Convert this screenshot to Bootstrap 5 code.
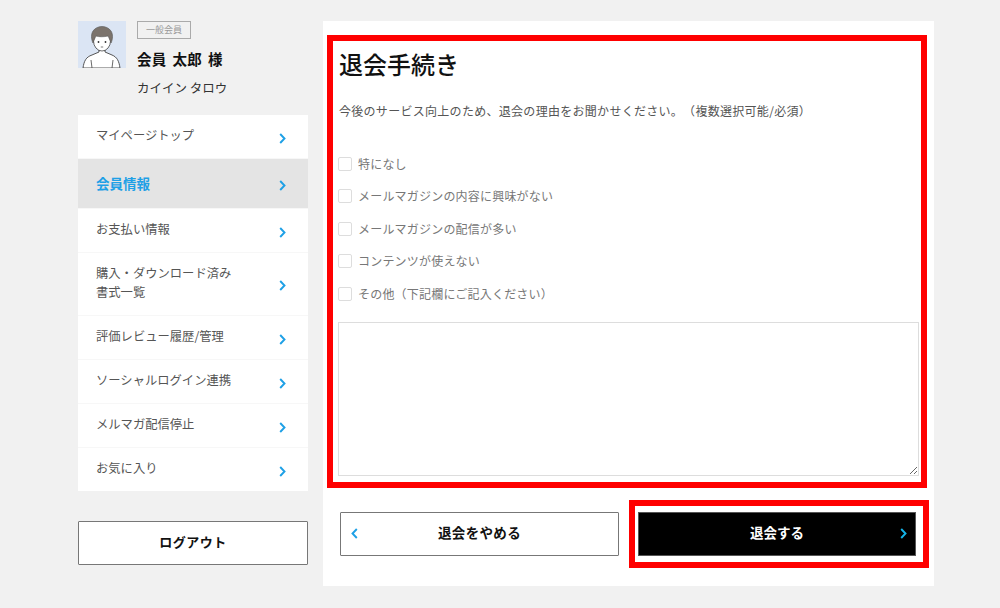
<!DOCTYPE html>
<html lang="ja">
<head>
<meta charset="utf-8">
<title>退会手続き</title>
<link href="https://cdn.jsdelivr.net/npm/bootstrap@5.3.0/dist/css/bootstrap.min.css" rel="stylesheet">
<style>
html,body{height:608px;overflow:hidden}
body{background:#f1f1f1;font-family:"Noto Sans CJK JP","Liberation Sans",sans-serif;color:#333;text-spacing-trim:space-all}
.shell{padding:21px 66px 0 78px;gap:15px}
.side{width:230px;flex:none}
.avatar{width:48px;height:47px;flex:none;background:#dbe5f4;display:block}
.who{margin-left:11px}
.rank{display:block;width:54px;height:18px;border:1px solid #aaa;font-size:9px;line-height:16px;text-align:center;color:#999;letter-spacing:0}
.uname{font-size:14.5px;font-weight:700;color:#111;line-height:20px;margin-top:10px;word-spacing:2.8px;letter-spacing:.15px}
.ukana{font-size:12.5px;line-height:18px;margin-top:10px;color:#333}
.menu{margin-top:18px;gap:1px;background:#f7f7f7}
.mitem{background:#fff;color:#555;font-size:12.3px;line-height:19px;height:43px;padding:0 22px 0 18px;text-decoration:none}
.mitem .mtxt{margin-top:-3px}
.mitem svg{margin-top:3px}
.mitem.tall{height:62px}
.mitem.now{background:#e4e4e4;color:#1ea0e6;font-weight:700;font-size:13.5px;height:49px}
.mitem.now .mtxt{margin-top:0}
.logout{display:block;margin-top:30px;height:44px;border:1px solid #777;border-radius:1px;background:#fff;color:#111;font-size:13px;font-weight:700;text-align:center;padding:0 0 2px;letter-spacing:.5px}
.panel{width:611px;flex:none;height:565px;background:#fff;padding:14px 7px 0 4px}
.redbox{border:6px solid #f00;height:453px;padding:0 2px 0 5px}
.pagetitle{font-size:24px;font-weight:500;color:#111;line-height:34px;margin:0;padding:6px 0 0 1px}
.lead-note{font-size:12px;line-height:18px;color:#555;margin:21px 0 0 1px;letter-spacing:.29px}
.reasons{margin-top:35px;gap:14.4px}
.reason{font-size:12px;line-height:18px;color:#777;letter-spacing:.2px;gap:6px;margin:0}
.reason .form-check-input{width:14px;height:14px;margin:0;border:1px solid #ddd;border-radius:2px;flex:none}
.memo{display:block;margin-top:19px;width:100%;height:154px;border:1px solid #ddd;border-radius:0;resize:vertical;background:#fff;padding:0}
.actions{margin-top:12px;height:68px}
.backbtn,.leavebtn{position:relative;height:44px;font-size:13.5px;font-weight:700;border-radius:1px;padding:0 0 4px}
.backbtn{width:279px;margin-left:13px;background:#fff;color:#111;border:1px solid #777;letter-spacing:.35px}
.backbox{width:298px;height:68px;flex:none}
.redtwo{width:300px;height:68px;border:6px solid #f00;flex:none;margin-left:4px;padding:6px 3px}
.leavebtn{width:278px;background:#000;color:#fff;border:1px solid #555;display:block;border-radius:0}
.chev{position:absolute;top:15px}
</style>
</head>
<body>
<div class="shell d-flex align-items-start">
  <aside class="side">
    <div class="d-flex">
      <svg class="avatar" viewBox="0 0 48 47">
        <path d="M5 47c1-7 3-11 9-13l7-3v-4h6v4l7 3c5 2 7 6 8 13z" fill="#fff" stroke="#444" stroke-width=".9"/>
        <path d="M13 39l1 8M35 39l-1 8" stroke="#444" stroke-width=".8" fill="none"/>
        <ellipse cx="24" cy="20" rx="8.500" ry="10" fill="#fff" stroke="#444" stroke-width=".8"/>
        <path d="M15 22c-2-4-2-9 0-12 4-6 14-6 18 0 2 3 2 8 0 12-1-3-2-5-3-7-4 1-9 1-12 0-1 2-2 4-3 7z" fill="#7b736c" stroke="#555" stroke-width=".6"/>
        <circle cx="20.500" cy="21" r=".9" fill="#333"/><circle cx="27.500" cy="21" r=".9" fill="#333"/>
        <path d="M22.800 26h2.400" stroke="#444" stroke-width=".7"/>
      </svg>
      <div class="who">
        <span class="rank">一般会員</span>
        <div class="uname">会員 太郎 様</div>
        <div class="ukana">カイイン タロウ</div>
      </div>
    </div>
    <nav class="menu d-flex flex-column">
      <a class="mitem d-flex align-items-center justify-content-between" href="#"><span class="mtxt">マイページトップ</span><svg width="7" height="11" viewBox="0 0 7 11"><path d="M1.200 1l4.300 4.500-4.300 4.500" fill="none" stroke="#1ea0e6" stroke-width="1.900"/></svg></a>
      <a class="mitem now d-flex align-items-center justify-content-between" href="#"><span class="mtxt">会員情報</span><svg width="7" height="11" viewBox="0 0 7 11"><path d="M1.200 1l4.300 4.500-4.300 4.500" fill="none" stroke="#1ea0e6" stroke-width="1.900"/></svg></a>
      <a class="mitem d-flex align-items-center justify-content-between" href="#"><span class="mtxt">お支払い情報</span><svg width="7" height="11" viewBox="0 0 7 11"><path d="M1.200 1l4.300 4.500-4.300 4.500" fill="none" stroke="#1ea0e6" stroke-width="1.900"/></svg></a>
      <a class="mitem tall d-flex align-items-center justify-content-between" href="#"><span class="mtxt">購入・ダウンロード済み<br>書式一覧</span><svg width="7" height="11" viewBox="0 0 7 11"><path d="M1.200 1l4.300 4.500-4.300 4.500" fill="none" stroke="#1ea0e6" stroke-width="1.900"/></svg></a>
      <a class="mitem d-flex align-items-center justify-content-between" href="#"><span class="mtxt">評価レビュー履歴/管理</span><svg width="7" height="11" viewBox="0 0 7 11"><path d="M1.200 1l4.300 4.500-4.300 4.500" fill="none" stroke="#1ea0e6" stroke-width="1.900"/></svg></a>
      <a class="mitem d-flex align-items-center justify-content-between" href="#"><span class="mtxt">ソーシャルログイン連携</span><svg width="7" height="11" viewBox="0 0 7 11"><path d="M1.200 1l4.300 4.500-4.300 4.500" fill="none" stroke="#1ea0e6" stroke-width="1.900"/></svg></a>
      <a class="mitem d-flex align-items-center justify-content-between" href="#"><span class="mtxt">メルマガ配信停止</span><svg width="7" height="11" viewBox="0 0 7 11"><path d="M1.200 1l4.300 4.500-4.300 4.500" fill="none" stroke="#1ea0e6" stroke-width="1.900"/></svg></a>
      <a class="mitem d-flex align-items-center justify-content-between" href="#"><span class="mtxt">お気に入り</span><svg width="7" height="11" viewBox="0 0 7 11"><path d="M1.200 1l4.300 4.500-4.300 4.500" fill="none" stroke="#1ea0e6" stroke-width="1.900"/></svg></a>
    </nav>
    <button class="btn logout w-100" type="button">ログアウト</button>
  </aside>
  <main class="panel">
    <section class="redbox">
      <h1 class="pagetitle">退会手続き</h1>
      <p class="lead-note">今後のサービス向上のため、退会の理由をお聞かせください。（複数選択可能/必須）</p>
      <div class="reasons d-flex flex-column">
        <label class="reason d-flex align-items-center"><input class="form-check-input" type="checkbox">特になし</label>
        <label class="reason d-flex align-items-center"><input class="form-check-input" type="checkbox">メールマガジンの内容に興味がない</label>
        <label class="reason d-flex align-items-center"><input class="form-check-input" type="checkbox">メールマガジンの配信が多い</label>
        <label class="reason d-flex align-items-center"><input class="form-check-input" type="checkbox">コンテンツが使えない</label>
        <label class="reason d-flex align-items-center"><input class="form-check-input" type="checkbox">その他（下記欄にご記入ください）</label>
      </div>
      <textarea class="form-control memo" aria-label="その他"></textarea>
    </section>
    <div class="actions d-flex">
      <div class="backbox d-flex align-items-center">
        <button class="btn backbtn" type="button">退会をやめる<svg class="chev" style="left:10px" width="7" height="11" viewBox="0 0 7 11"><path d="M5.800 1l-4.300 4.500 4.300 4.500" fill="none" stroke="#1ea0e6" stroke-width="1.900"/></svg></button>
      </div>
      <div class="redtwo">
        <button class="btn leavebtn" type="button">退会する<svg class="chev" style="right:8px" width="7" height="11" viewBox="0 0 7 11"><path d="M1.200 1l4.300 4.500-4.300 4.500" fill="none" stroke="#14b4e8" stroke-width="1.900"/></svg></button>
      </div>
    </div>
  </main>
</div>
<script src="https://cdn.jsdelivr.net/npm/bootstrap@5.3.0/dist/js/bootstrap.bundle.min.js"></script>
</body>
</html>
